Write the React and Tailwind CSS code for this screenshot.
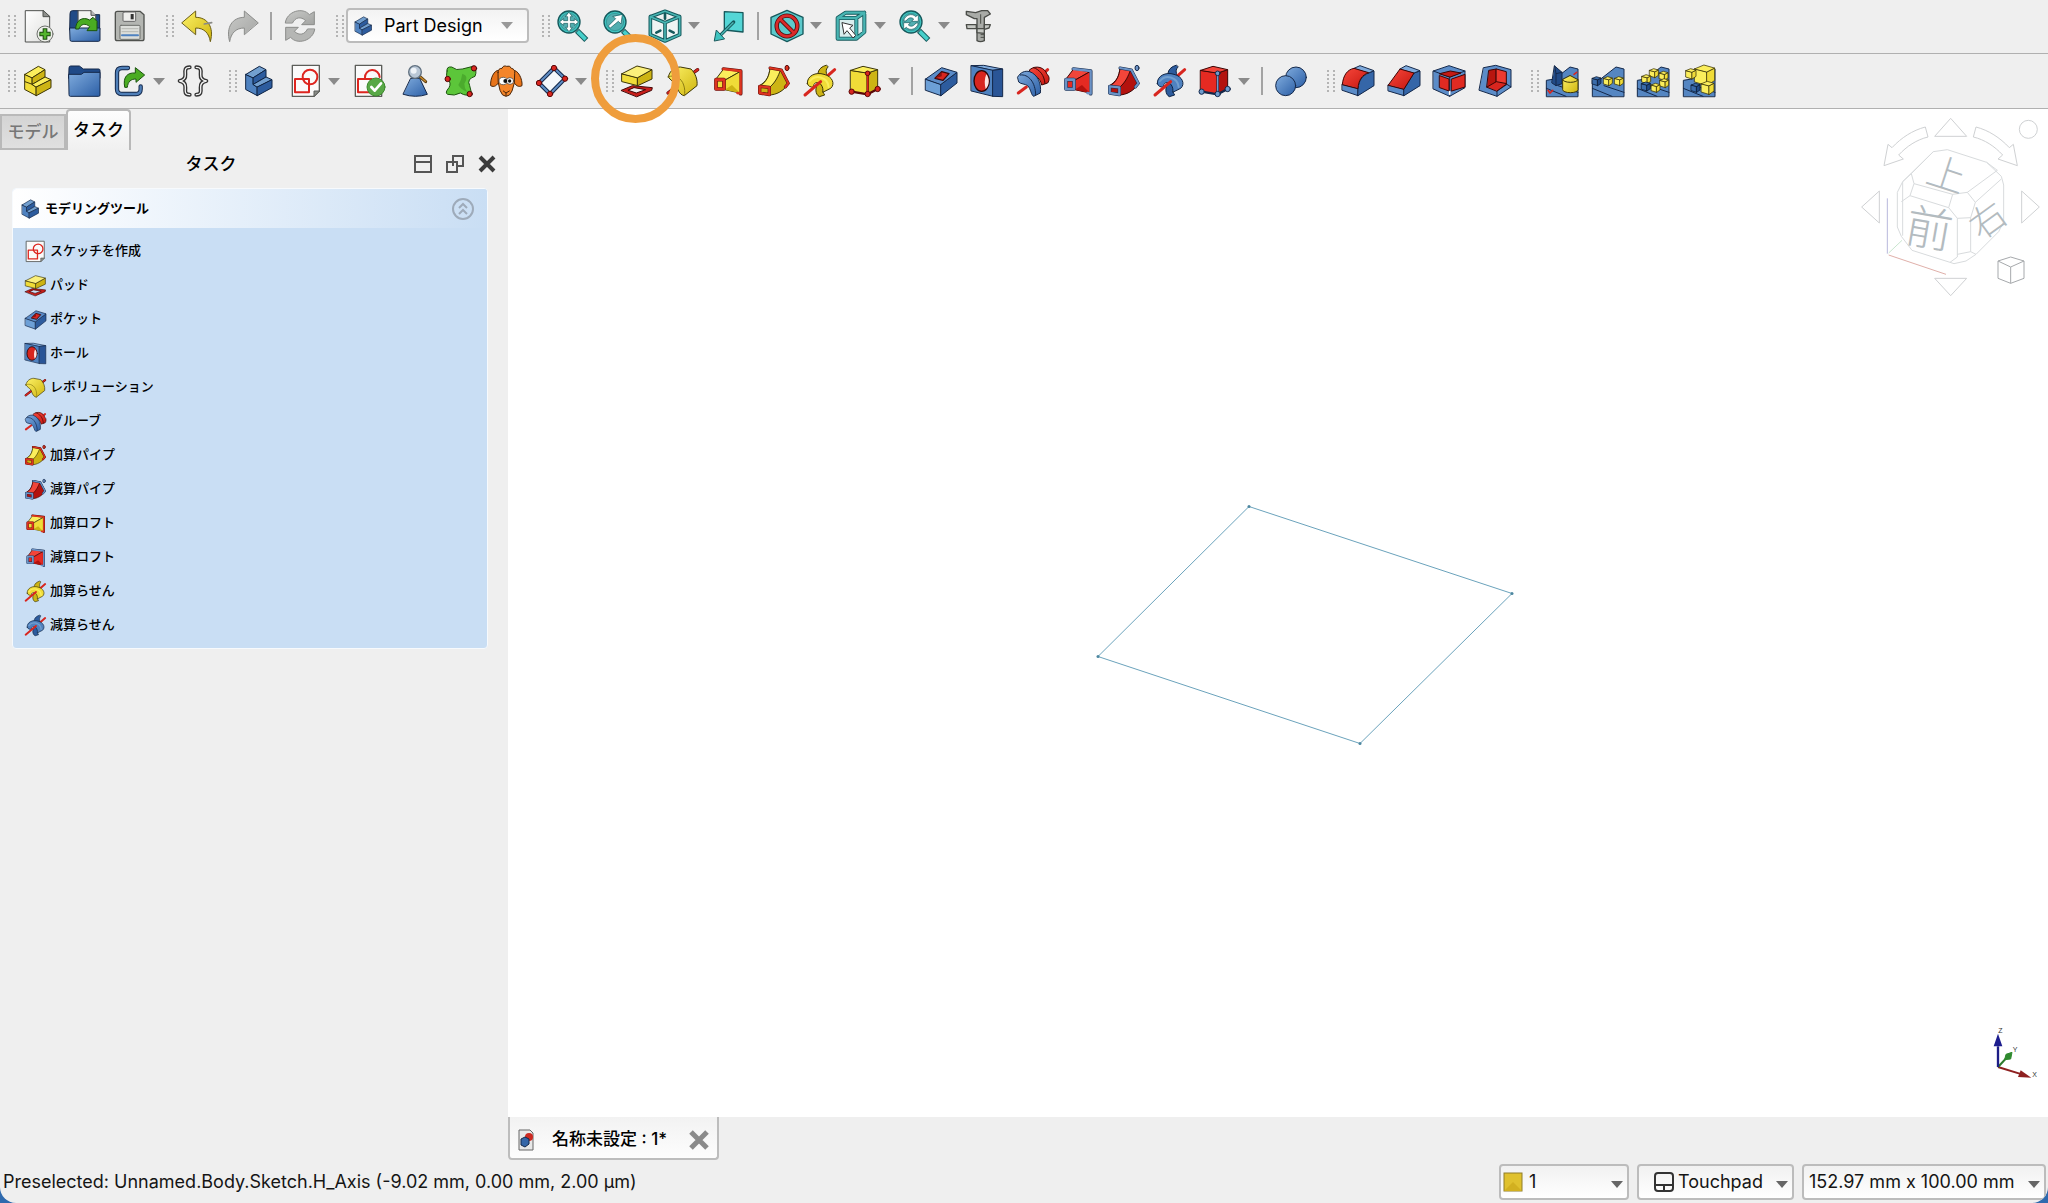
import { useState } from "react"

const INK = "#14284a"

const PALETTES = {
  blue: { light: "#729fcf", mid: "#4f82c0", dark: "#2d5c9e", line: "#0f2444" },
  navy: { light: "#3a6cab", mid: "#204a87", dark: "#173666", line: "#0a1a33" },
  yellow: { light: "#fbee5c", mid: "#f0dc38", dark: "#cdb414", line: "#3d3608" },
  red: { light: "#f2453a", mid: "#e52a22", dark: "#b3120e", line: "#3d0606" },
}

const TEAL = "#3fc4c0"
const TEAL_LINE = "#16595c"

function Svg({ children, className = "size-8" }) {
  return (
    <svg
      viewBox="0 0 96 96"
      className={`${className} shrink-0 overflow-visible`}
      fill="none"
      strokeLinejoin="round"
      strokeLinecap="round"
      strokeWidth="3"
      aria-hidden="true"
    >
      {children}
    </svg>
  )
}

function Gradients() {
  return (
    <svg className="absolute size-0" aria-hidden="true">
      <defs>
        <linearGradient id="g-blue" x1="0" y1="0" x2="1" y2="1">
          <stop offset="0" stopColor="#7fabdd" />
          <stop offset="1" stopColor="#2c5fa6" />
        </linearGradient>
        <linearGradient id="g-yellow" x1="0" y1="0" x2="1" y2="1">
          <stop offset="0" stopColor="#fdf267" />
          <stop offset="1" stopColor="#cfb50f" />
        </linearGradient>
        <linearGradient id="g-red" x1="0" y1="0" x2="1" y2="1">
          <stop offset="0" stopColor="#f7473b" />
          <stop offset="1" stopColor="#c5160f" />
        </linearGradient>
        <linearGradient id="g-grey" x1="0" y1="0" x2="1" y2="1">
          <stop offset="0" stopColor="#c9cac8" />
          <stop offset="1" stopColor="#a2a3a1" />
        </linearGradient>
        <linearGradient id="g-paper" x1="0" y1="0" x2="1" y2="1">
          <stop offset="0" stopColor="#ffffff" />
          <stop offset="1" stopColor="#dededc" />
        </linearGradient>
      </defs>
    </svg>
  )
}

/* ---------- file and edit icons ---------- */

function NewIcon() {
  return (
    <Svg>
      <path d="M8 2H60L80 20V96H8Z" fill="url(#g-paper)" stroke="#4f514e" />
      <path d="M60 2V20H80Z" fill="#8d8f8b" stroke="#4f514e" />
      <circle cx="66" cy="72" r="24" fill="#eef0ea" stroke="#6d6f6b" />
      <path d="M66 55V89M49 72H83" stroke="#1d4a10" strokeWidth="14" strokeLinecap="butt" />
      <path d="M66 58V86M52 72H80" stroke="#54b52d" strokeWidth="8" strokeLinecap="butt" />
    </Svg>
  )
}

function OpenIcon() {
  return (
    <Svg>
      <path d="M3 10Q3 2 10 2H30V14H92V60H3Z" fill="#204a87" stroke={INK} />
      <path d="M28 2H66L80 16V64H28Z" fill="#f4f4f2" stroke="#555" />
      <path d="M66 2V16H80" fill="#bbb" stroke="#555" />
      <path d="M3 54H93V90Q93 94 88 94H8Q3 94 3 90Z" fill="url(#g-blue)" stroke={INK} />
      <path
        d="M20 56C20 32 40 18 62 30L72 22L84 34V62H54L62 50C50 38 34 42 30 56Z"
        fill="#4aac22"
        stroke="#1b530e"
      />
    </Svg>
  )
}

function SaveIcon() {
  return (
    <Svg>
      <path d="M10 4H78L90 14V86Q90 92 84 92H10Q4 92 4 86V10Q4 4 10 4Z" fill="#b4b6b2" stroke="#4f514e" strokeWidth="4" />
      <rect x="27" y="6" width="38" height="28" rx="3" fill="#eeeeec" stroke="#666" />
      <rect x="50" y="12" width="9" height="16" fill="#333" />
      <rect x="18" y="46" width="60" height="42" rx="3" fill="#dcdeda" stroke="#6d6f6b" />
      <path d="M24 56H72M24 65H72" stroke="#b6b8b4" />
      <path d="M24 76H72" stroke="#4f82c0" strokeWidth="6" />
    </Svg>
  )
}

function UndoIcon() {
  return (
    <Svg>
      <path d="M3 38L44 3V22C80 22 100 52 88 95C84 70 70 54 44 54V73Z" fill="url(#g-yellow)" stroke="#6b5d12" />
      <path d="M70 42L92 38" stroke="#8a8a86" strokeWidth="5" />
    </Svg>
  )
}

function RedoIcon() {
  return (
    <Svg>
      <path d="M93 38L52 3V22C16 22 -4 52 8 95C12 70 26 54 52 54V73Z" fill="url(#g-grey)" stroke="#8b8c8a" />
    </Svg>
  )
}

function RefreshIcon() {
  const arrow = "M4 38C8 4 56 -10 76 14L91 5V44H53L65 32C50 18 34 22 26 38Z"
  return (
    <Svg>
      <path d={arrow} fill="url(#g-grey)" stroke="#8b8c8a" />
      <path d={arrow} transform="rotate(180 48 48)" fill="#b5b6b4" stroke="#8b8c8a" />
    </Svg>
  )
}

/* ---------- view icons ---------- */

function Magnifier({ children }) {
  return (
    <Svg>
      <path d="M60 62L88 90" stroke={TEAL_LINE} strokeWidth="17" strokeLinecap="butt" />
      <path d="M62 64L86 88" stroke="#46cfca" strokeWidth="11" strokeLinecap="butt" />
      <circle cx="36" cy="36" r="33" fill={TEAL} stroke={TEAL_LINE} strokeWidth="4" />
      <circle cx="36" cy="36" r="26" fill="#52aeb0" stroke="#2b8d8d" strokeWidth="2" />
      {children}
    </Svg>
  )
}

function FitAllIcon() {
  return (
    <Magnifier>
      <path
        d="M36 7L46 20H40V32H52V26L65 36L52 46V40H40V52H46L36 65L26 52H32V40H20V46L7 36L20 26V32H32V20H26Z"
        fill="#fff"
        stroke={TEAL_LINE}
        strokeWidth="2"
      />
    </Magnifier>
  )
}

function FitSelectionIcon() {
  return (
    <Magnifier>
      <path d="M58 14L54 42L46 34L22 54L16 48L38 26L30 20Z" fill="#fff" stroke={TEAL_LINE} strokeWidth="2" />
    </Magnifier>
  )
}

function SyncViewIcon() {
  return (
    <Magnifier>
      <path d="M14 32C18 14 40 8 50 20L58 14V34H38L44 27C36 20 26 24 22 32Z" fill="#fff" stroke={TEAL_LINE} strokeWidth="2" />
      <path d="M58 40C54 58 32 64 22 52L14 58V38H34L28 45C36 52 46 48 50 40Z" fill="#fff" stroke={TEAL_LINE} strokeWidth="2" />
    </Magnifier>
  )
}

function IsometricIcon() {
  const frame = "M48 4L92 20V74L48 93L4 74V20ZM4 20L48 38L92 20M48 38V93"
  return (
    <Svg>
      <path d={frame} fill="#eef4f4" stroke={TEAL_LINE} strokeWidth="11" />
      <path d={frame} stroke="#48b5b3" strokeWidth="5" />
      <path d="M22 68L34 62M62 62L74 68M48 12V26" stroke={TEAL_LINE} strokeWidth="8" />
    </Svg>
  )
}

function AlignIcon() {
  return (
    <Svg>
      <path d="M34 5L90 8V66L34 60Z" fill="#54d6d6" stroke={TEAL_LINE} strokeWidth="4" />
      <path d="M62 36L24 74" stroke={TEAL_LINE} strokeWidth="10" />
      <path d="M60 38L24 74" stroke="#48b5b3" strokeWidth="4" />
      <path d="M4 92L10 60L34 86Z" fill={TEAL} stroke={TEAL_LINE} />
    </Svg>
  )
}

function DrawStyleIcon() {
  return (
    <Svg>
      <path d="M48 1L96 22V72L48 95L0 72V22Z" fill="#5cc9cb" stroke={TEAL_LINE} strokeWidth="4" />
      <circle cx="48" cy="48" r="31" stroke="#4a0d0d" strokeWidth="13" />
      <path d="M27 27L69 69" stroke="#4a0d0d" strokeWidth="13" />
      <circle cx="48" cy="48" r="31" stroke="#d92a2a" strokeWidth="8" />
      <path d="M27 27L69 69" stroke="#d92a2a" strokeWidth="8" />
    </Svg>
  )
}

function SelectionViewIcon() {
  const frame = "M8 24L32 8H88L88 66L64 86H8ZM8 24H64L88 8M64 24V86"
  return (
    <Svg>
      <path d={frame} fill="#d9eeee" stroke={TEAL_LINE} strokeWidth="12" />
      <path d={frame} stroke="#48b5b3" strokeWidth="7" />
      <path d="M22 38L54 46L44 54L62 76L54 84L36 62L28 72Z" fill="#fff" stroke="#333" />
    </Svg>
  )
}

function MeasureIcon() {
  return (
    <Svg>
      <path d="M10 4L38 8L56 2H74L82 12L64 22V92Q52 98 42 92V26H34L10 14Z" fill="#a9aba7" stroke="#4a4c48" strokeWidth="4" />
      <path d="M10 44H40V56H64V44H82L78 54L64 58V70L42 68V56H12Z" fill="#c6c8c4" stroke="#4a4c48" strokeWidth="4" />
      <path d="M53 14V40M54 74H62M54 82H62" stroke="#4a4c48" />
    </Svg>
  )
}

/* ---------- structure icons ---------- */

function StairIcon({ tone = "blue", split = false, className }) {
  const c = PALETTES[tone]
  return (
    <Svg className={className}>
      <g stroke={c.line}>
        <path d="M6 28L28 38V58L40 66V92L6 74Z" fill={c.mid} />
        <path d="M6 28L46 4L66 14L28 38Z" fill={c.light} />
        <path d="M28 38L66 14V36L28 58Z" fill={c.dark} />
        <path d="M28 58L66 36L84 44L40 66Z" fill={c.light} />
        <path d="M40 66L84 44V68L40 92Z" fill={c.dark} />
        {split && <path d="M6 50L28 58" />}
      </g>
    </Svg>
  )
}

function GroupIcon() {
  return (
    <Svg>
      <path d="M3 8Q3 3 8 3H34L46 12H92Q96 12 96 17V40H3Z" fill="#204a87" stroke={INK} />
      <path d="M3 28H40L48 22H96V90Q96 94 92 94H7Q3 94 3 90Z" fill="url(#g-blue)" stroke={INK} />
    </Svg>
  )
}

function LinkIcon() {
  const frame = "M42 9H24Q9 9 9 24V72Q9 87 24 87H66Q80 87 80 72V64"
  return (
    <Svg>
      <path d={frame} stroke={INK} strokeWidth="13" />
      <path d={frame} stroke="#4f7fb8" strokeWidth="7" />
      <path d="M32 66C26 36 40 22 64 24V8L92 30L66 52V42C50 42 42 50 40 66Z" fill="#4aac22" stroke="#1b530e" />
    </Svg>
  )
}

function VariableSetIcon() {
  const left = "M38 7C24 7 24 14 25 28C26 40 20 46 8 48C20 50 26 56 25 68C24 82 24 89 38 89"
  return (
    <Svg>
      <path d={left} stroke="#333" strokeWidth="12" />
      <path d={left} stroke="#f4f4f4" strokeWidth="4" />
      <g transform="matrix(-1 0 0 1 96 0)">
        <path d={left} stroke="#333" strokeWidth="12" />
        <path d={left} stroke="#f4f4f4" strokeWidth="4" />
      </g>
    </Svg>
  )
}

/* ---------- sketch icons ---------- */

function SketchIcon({ className }) {
  return (
    <Svg className={className}>
      <path d="M7 1H88V78L72 94H7Z" fill="#fafafa" stroke="#5c5e5a" strokeWidth="4" />
      <path d="M72 94V78H88Z" fill="#8b8d89" stroke="#5c5e5a" />
      <rect x="15" y="42" width="42" height="40" stroke="#dd2620" strokeWidth="6" />
      <circle cx="60" cy="36" r="22" stroke="#dd2620" strokeWidth="6" />
    </Svg>
  )
}

function ValidateSketchIcon() {
  return (
    <Svg>
      <path d="M7 1H86V94H7Z" fill="#fafafa" stroke="#5c5e5a" strokeWidth="4" />
      <path d="M15 42H56V82H15ZM36 38A22 22 0 0 1 80 36" stroke="#dd2620" strokeWidth="6" />
      <circle cx="69" cy="66" r="27" fill="#58a846" stroke="#3c8a2c" />
      <path d="M55 66L65 77L84 55" stroke="#fff" strokeWidth="8" />
    </Svg>
  )
}

function CheckGeometryIcon() {
  return (
    <Svg>
      <path d="M36 40H62L85 88Q50 100 13 88Z" fill="url(#g-blue)" stroke={INK} />
      <path d="M62 34L80 50" stroke="#5a3c10" strokeWidth="9" />
      <path d="M64 36L79 49" stroke="#c98a2c" strokeWidth="4" />
      <circle cx="48" cy="21" r="19" fill="#b9c7d6" stroke="#60707f" strokeWidth="4" />
      <circle cx="44" cy="17" r="9" fill="#eef3f8" />
    </Svg>
  )
}

function SubShapeBinderIcon() {
  return (
    <Svg>
      <path
        d="M6 18Q4 4 20 6Q34 18 52 12L84 4Q98 14 90 34Q64 42 74 62L80 86Q66 96 46 84Q28 94 8 88Q-2 84 12 68Q20 54 8 42Q2 32 6 18Z"
        fill="#5cc63a"
        stroke="#1d5410"
      />
      <path d="M52 26Q74 32 58 56Q58 70 66 80Q48 74 40 60Q50 44 52 26Z" fill="#3f9a25" opacity="0.6" />
      <g fill="#d8261f" stroke="#4a0808">
        <circle cx="87" cy="10" r="8" />
        <circle cx="8" cy="42" r="8" />
        <circle cx="74" cy="87" r="8" />
      </g>
    </Svg>
  )
}

function CloneIcon() {
  return (
    <Svg>
      <path d="M26 16C12 14 0 42 2 62C12 68 22 62 28 48Z" fill="#e8741a" stroke="#4a260a" />
      <path d="M70 16C84 14 98 42 96 62C86 68 76 62 70 48Z" fill="#e8741a" stroke="#4a260a" />
      <path
        d="M24 22Q24 10 36 10Q40 0 50 4Q60 0 64 10Q76 12 74 26Q76 56 66 78Q60 94 48 94Q36 94 30 76Q22 54 24 22Z"
        fill="#f4852a"
        stroke="#4a260a"
      />
      <ellipse cx="40" cy="48" rx="13" ry="11" fill="#fff" stroke="#333" strokeWidth="2" />
      <ellipse cx="60" cy="48" rx="11" ry="10" fill="#fff" stroke="#333" strokeWidth="2" />
      <circle cx="46" cy="48" r="6" fill="#111" />
      <circle cx="59" cy="48" r="5" fill="#111" />
      <path d="M40 78L48 84L58 78M48 84V92" stroke="#4a260a" />
    </Svg>
  )
}

function DatumPlaneIcon() {
  const plane = "M54 9L87 41L42 87L9 54Z"
  return (
    <Svg>
      <path d={plane} fill="#f6f8fb" stroke={INK} strokeWidth="12" />
      <path d={plane} stroke="#5f8dc4" strokeWidth="6" />
      <g fill="#d8261f" stroke="#5a0808">
        <circle cx="54" cy="9" r="8" />
        <circle cx="87" cy="41" r="8" />
        <circle cx="42" cy="87" r="8" />
        <circle cx="9" cy="54" r="8" />
      </g>
    </Svg>
  )
}

/* ---------- additive and subtractive icons ---------- */

function PadIcon({ className }) {
  return (
    <Svg className={className}>
      <path
        fillRule="evenodd"
        d="M1 76L34 62L94 68L92 76L48 95ZM22 76L46 84L74 74L40 68Z"
        fill="#c81e1a"
        stroke="#420606"
      />
      <path d="M3 26L50 38V62L3 50Z" fill="#f0dc38" stroke="#3d3608" />
      <path d="M50 38L93 14V42L50 62Z" fill="#cdb414" stroke="#3d3608" />
      <path d="M3 26L48 3L93 14L50 38Z" fill="#fbf07a" stroke="#3d3608" />
    </Svg>
  )
}

function RevolutionIcon({ className }) {
  return (
    <Svg className={className}>
      <path d="M70 30L92 14" stroke="#5a0b0b" strokeWidth="10" />
      <path d="M70 30L92 14" stroke="#d8261f" strokeWidth="6" />
      <path
        d="M4 36C8 16 24 6 40 6L72 12C86 26 92 44 90 62L52 92C36 90 32 70 26 58C20 50 10 46 4 36Z"
        fill="url(#g-yellow)"
        stroke="#3d3608"
      />
      <path d="M4 36C22 26 44 40 50 60C54 72 54 82 52 92" stroke="#8d7d12" />
      <path d="M3 84L26 66" stroke="#5a0b0b" strokeWidth="10" />
      <path d="M3 84L26 66" stroke="#d8261f" strokeWidth="6" />
    </Svg>
  )
}

function GrooveIcon({ className }) {
  return (
    <Svg className={className}>
      <path d="M72 32L92 14" stroke="#d8261f" strokeWidth="9" />
      <path d="M38 14C58 -2 84 8 90 28C98 34 98 46 92 54L74 60C70 42 58 30 42 28Z" fill="url(#g-red)" stroke="#3d0606" />
      <path d="M50 8C68 14 82 30 84 56" stroke="#3d0606" />
      <path d="M2 36C10 22 24 16 38 20C62 28 74 56 70 84L50 94C42 90 42 72 32 62C24 56 12 58 6 52Z" fill="url(#g-blue)" stroke={INK} />
      <path d="M10 30C34 26 56 52 56 90" stroke={INK} />
      <path d="M4 84L28 66" stroke="#d8261f" strokeWidth="9" />
    </Svg>
  )
}

function LoftIcon({ cut = false, className }) {
  const c = cut ? PALETTES.red : PALETTES.yellow
  const edge = cut ? "#6c93c6" : "#dd3420"
  const edgeLine = cut ? INK : "#5a0b0b"
  return (
    <Svg className={className}>
      <path d="M34 12L86 18V86" stroke={edgeLine} strokeWidth="11" />
      <path d="M12 42L34 13L84 20L38 46Z" fill={c.light} stroke={c.line} />
      <path d="M38 46L84 20V84L38 74Z" fill={c.mid} stroke={c.line} />
      <path d="M38 74L60 60L84 84Z" fill={c.dark} />
      <path d="M34 12L86 18V86L76 84" stroke={edge} strokeWidth="7" />
      <rect x="12" y="44" width="24" height="28" fill={c.mid} stroke={edgeLine} strokeWidth="11" />
      <rect x="12" y="44" width="24" height="28" stroke={edge} strokeWidth="8" />
    </Svg>
  )
}

function PipeIcon({ cut = false, className }) {
  const c = cut ? PALETTES.red : PALETTES.yellow
  const edge = cut ? "#6c93c6" : "#dd3420"
  const edgeLine = cut ? INK : "#5a0b0b"
  return (
    <Svg className={className}>
      <path d="M36 8L70 14L92 56C76 78 56 90 32 90L4 84V62C24 50 34 36 36 8Z" fill={c.dark} stroke={c.line} />
      <path d="M36 8L68 14C60 34 54 50 36 66L8 62C26 48 34 34 36 8Z" fill={c.light} stroke={c.line} />
      <path d="M36 9L70 15L91 55L82 66" stroke={edgeLine} strokeWidth="9" />
      <path d="M36 9L70 15L91 55L82 66" stroke={edge} strokeWidth="6" />
      <path d="M5 64L34 67V89L5 84Z" fill={c.dark} stroke={edgeLine} strokeWidth="10" />
      <path d="M5 64L34 67V89L5 84Z" stroke={edge} strokeWidth="7" />
      <ellipse cx="87" cy="9" rx="6" ry="8" fill={edge} stroke={edgeLine} />
    </Svg>
  )
}

function HelixIcon({ cut = false, className }) {
  const c = cut ? PALETTES.blue : PALETTES.yellow
  return (
    <Svg className={className}>
      <path d="M66 1C40 8 34 32 54 48L76 40C64 28 64 12 72 6Z" fill={c.dark} stroke={c.line} />
      <path d="M92 14L60 42" stroke="#d8261f" strokeWidth="9" />
      <path d="M42 54C32 70 34 88 46 95L62 90C54 80 58 66 68 58Z" fill={c.dark} stroke={c.line} />
      <path
        d="M10 56C8 32 36 20 60 28C86 34 94 58 80 70L56 82C60 66 48 48 34 54Q26 58 30 66Q14 68 10 56Z"
        fill={c.mid}
        stroke={c.line}
      />
      <path d="M18 48C34 28 70 34 74 66" stroke={c.light} strokeWidth="6" />
      <path d="M3 90L50 50" stroke="#d8261f" strokeWidth="9" />
    </Svg>
  )
}

function PrimitiveIcon({ cut = false }) {
  const c = cut ? PALETTES.red : PALETTES.yellow
  const node = cut ? "#6f9cce" : "#d8261f"
  const nodeLine = cut ? INK : "#5a0808"
  return (
    <Svg>
      <g stroke={c.line}>
        <path d="M5 16L56 24V88L5 80Z" fill={c.mid} />
        <path d="M56 24L86 14V72L56 88Z" fill={c.dark} />
        <path d="M5 16L42 4L86 14L56 24Z" fill={c.light} />
      </g>
      <path d="M56 26V86M8 80L56 88L86 72" stroke={nodeLine} strokeWidth="7" />
      <path d="M56 26V86" stroke={node} strokeWidth="4" />
      <g fill={node} stroke={nodeLine}>
        <circle cx="56" cy="25" r="7" />
        <circle cx="8" cy="80" r="8" />
        <circle cx="56" cy="87" r="8" />
        <circle cx="86" cy="72" r="8" />
      </g>
    </Svg>
  )
}

function PocketIcon({ className }) {
  return (
    <Svg className={className}>
      <path d="M2 42L48 58V92L2 76Z" fill="#6c9fd6" stroke={INK} />
      <path d="M48 58L96 22V54L48 92Z" fill="#2d5c9e" stroke={INK} />
      <path d="M2 42L50 8L96 22L48 58Z" fill="#5b8cc8" stroke={INK} />
      <path d="M30 40L50 20L72 26L54 46Z" fill="#d8261f" stroke="#3d0606" strokeWidth="4" />
      <path d="M50 20V34L30 40Z" fill="#8a1210" />
    </Svg>
  )
}

function HoleIcon({ className }) {
  return (
    <Svg className={className}>
      <path d="M1 2L38 1L95 12L64 16Z" fill="#7fabdd" stroke={INK} />
      <path d="M1 2L66 16V94L1 78Z" fill="#4f82c0" stroke={INK} />
      <path d="M66 16L95 12V95L66 94Z" fill="#2a5596" stroke={INK} />
      <ellipse cx="32" cy="48" rx="23" ry="31" fill="#d8261f" stroke="#2a0606" strokeWidth="4" />
      <path d="M46 28C56 40 56 60 44 72C40 58 40 42 46 28Z" fill="#fbe6e2" />
    </Svg>
  )
}

function BooleanIcon() {
  return (
    <Svg>
      <circle cx="63" cy="37" r="31" fill="url(#g-blue)" stroke={INK} />
      <circle cx="32" cy="62" r="30" fill="url(#g-blue)" stroke={INK} />
    </Svg>
  )
}

/* ---------- dress-up icons ---------- */

function FilletIcon() {
  return (
    <Svg>
      <path d="M1 58L48 70V92L1 76Z" fill="#5b8cc8" stroke={INK} />
      <path d="M48 70C50 44 62 28 96 18V62L48 92Z" fill="#3566a8" stroke={INK} />
      <path d="M36 10L54 2L96 17L80 24Z" fill="#7fabdd" stroke={INK} />
      <path d="M1 58C4 30 16 14 36 10L80 23C60 30 50 44 48 70Z" fill="url(#g-red)" stroke="#3d0606" />
    </Svg>
  )
}

function ChamferIcon() {
  return (
    <Svg>
      <path d="M1 60L48 72V92L1 78Z" fill="#5b8cc8" stroke={INK} />
      <path d="M48 72L78 24L96 18V62L48 92Z" fill="#3566a8" stroke={INK} />
      <path d="M36 12L54 2L96 17L78 24Z" fill="#7fabdd" stroke={INK} />
      <path d="M1 60L36 12L78 24L48 72Z" fill="url(#g-red)" stroke="#3d0606" />
    </Svg>
  )
}

function DraftIcon() {
  return (
    <Svg>
      <path d="M1 18L48 2L96 18V68L50 94L1 72Z" fill="#5b8cc8" stroke={INK} />
      <path d="M1 18L50 36L96 18M50 36V94" stroke={INK} />
      <path d="M20 32L48 42V78L20 68Z" fill="#e02a22" stroke="#3d0606" />
      <path d="M56 42L96 28V66L56 78Z" fill="#e02a22" stroke="#3d0606" />
      <path d="M20 26L52 18L84 24L52 36Z" fill="#c51a14" stroke="#3d0606" />
      <path d="M50 80V88" stroke="#fff" strokeWidth="5" />
    </Svg>
  )
}

function ThicknessIcon() {
  return (
    <Svg>
      <path d="M14 8L50 1L96 14V66L54 94L1 76Z" fill="#5b8cc8" stroke={INK} />
      <path d="M54 94V78L84 58L96 66" stroke={INK} />
      <path d="M30 16L52 12V60L24 66Z" fill="#b8160f" stroke="#3d0606" />
      <path d="M52 12L82 20V56L52 60Z" fill="#ee3a30" stroke="#3d0606" />
      <path d="M24 66L52 50L84 56L54 78Z" fill="#d8261f" stroke="#3d0606" />
    </Svg>
  )
}

/* ---------- transform icons ---------- */

function MiniCube({ x, y, size = 26, tone = "yellow" }) {
  const c = PALETTES[tone]
  return (
    <g transform={`translate(${x} ${y}) scale(${size / 26})`} stroke={c.line} strokeWidth={60 / size}>
      <path d="M-13 -8L3 -4V14L-13 9Z" fill={c.light} />
      <path d="M3 -4L13 -9V7L3 14Z" fill={c.mid} />
      <path d="M-13 -8L-1 -13L13 -9L3 -4Z" fill={c.light} />
    </g>
  )
}

function PatternBase({ children }) {
  return (
    <Svg>
      <path d="M1 94V46L26 42L72 6L96 12V94Z" fill="#5586c2" stroke={INK} />
      <path d="M1 70L60 94M36 62L96 82" stroke={INK} />
      {children}
    </Svg>
  )
}

function MirrorIcon() {
  return (
    <PatternBase>
      <path d="M26 3L48 22V56L30 62L18 54Z" fill="#204a87" stroke={INK} />
      <path d="M26 3L30 26L48 22M30 26V62" stroke={INK} />
      <path d="M50 44V74A23 9 0 0 0 96 74V44L73 32Z" fill="url(#g-yellow)" stroke="#3d3608" />
      <path d="M50 44A23 8 0 0 0 96 44" stroke="#3d3608" />
      <path d="M6 76L12 84L20 76M84 28L92 22" stroke="#d8261f" strokeWidth="5" />
    </PatternBase>
  )
}

function LinearPatternIcon() {
  return (
    <PatternBase>
      <MiniCube x={14} y={48} tone="navy" />
      <MiniCube x={48} y={48} />
      <MiniCube x={81} y={48} />
    </PatternBase>
  )
}

function PolarPatternIcon() {
  return (
    <PatternBase>
      <MiniCube x={51} y={24} />
      <MiniCube x={80} y={32} />
      <MiniCube x={28} y={42} />
      <MiniCube x={82} y={54} />
      <MiniCube x={27} y={64} tone="navy" />
      <MiniCube x={56} y={68} />
    </PatternBase>
  )
}

function MultiTransformIcon() {
  return (
    <PatternBase>
      <MiniCube x={65} y={30} size={60} />
      <MiniCube x={24} y={26} size={30} />
      <MiniCube x={38} y={68} tone="navy" />
      <MiniCube x={74} y={68} size={38} />
    </PatternBase>
  )
}

/* ---------- toolbars ---------- */

const fileTools = [
  { label: "新規", icon: <NewIcon /> },
  { label: "開く", icon: <OpenIcon /> },
  { label: "保存", icon: <SaveIcon /> },
]

const editTools = [
  { label: "元に戻す", icon: <UndoIcon /> },
  { label: "やり直し", icon: <RedoIcon /> },
  { separator: true },
  { label: "更新", icon: <RefreshIcon /> },
]

const viewTools = [
  { label: "全てにフィット", icon: <FitAllIcon /> },
  { label: "選択にフィット", icon: <FitSelectionIcon /> },
  { label: "アイソメトリック", icon: <IsometricIcon />, menu: true },
  { label: "選択に整列", icon: <AlignIcon /> },
  { separator: true },
  { label: "表示スタイル", icon: <DrawStyleIcon />, menu: true },
  { label: "選択ビュー", icon: <SelectionViewIcon />, menu: true },
  { label: "ビューを同期", icon: <SyncViewIcon />, menu: true },
  { label: "測定", icon: <MeasureIcon /> },
]

const structureTools = [
  { label: "パーツを作成", icon: <StairIcon tone="yellow" split /> },
  { label: "グループを作成", icon: <GroupIcon /> },
  { label: "リンクを作成", icon: <LinkIcon />, menu: true },
  { label: "変数セット", icon: <VariableSetIcon /> },
]

const helperTools = [
  { label: "ボディを作成", icon: <StairIcon /> },
  { label: "スケッチを作成", icon: <SketchIcon />, menu: true },
  { label: "スケッチを検証", icon: <ValidateSketchIcon /> },
  { label: "ジオメトリーをチェック", icon: <CheckGeometryIcon /> },
  { label: "シェイプバインダー", icon: <SubShapeBinderIcon /> },
  { label: "クローンを作成", icon: <CloneIcon /> },
  { label: "データム平面", icon: <DatumPlaneIcon />, menu: true },
]

const modelingTools = [
  { label: "パッド", icon: <PadIcon /> },
  { label: "レボリューション", icon: <RevolutionIcon /> },
  { label: "加算ロフト", icon: <LoftIcon /> },
  { label: "加算パイプ", icon: <PipeIcon /> },
  { label: "加算らせん", icon: <HelixIcon /> },
  { label: "加算プリミティブ", icon: <PrimitiveIcon />, menu: true },
  { separator: true },
  { label: "ポケット", icon: <PocketIcon /> },
  { label: "ホール", icon: <HoleIcon /> },
  { label: "グルーブ", icon: <GrooveIcon /> },
  { label: "減算ロフト", icon: <LoftIcon cut /> },
  { label: "減算パイプ", icon: <PipeIcon cut /> },
  { label: "減算らせん", icon: <HelixIcon cut /> },
  { label: "減算プリミティブ", icon: <PrimitiveIcon cut />, menu: true },
  { separator: true },
  { label: "ブーリアン", icon: <BooleanIcon /> },
]

const dressUpTools = [
  { label: "フィレット", icon: <FilletIcon /> },
  { label: "面取り", icon: <ChamferIcon /> },
  { label: "抜き勾配", icon: <DraftIcon /> },
  { label: "厚み", icon: <ThicknessIcon /> },
]

const transformTools = [
  { label: "鏡像", icon: <MirrorIcon /> },
  { label: "直線状パターン", icon: <LinearPatternIcon /> },
  { label: "円状パターン", icon: <PolarPatternIcon /> },
  { label: "マルチ変換", icon: <MultiTransformIcon /> },
]

function Caret({ className = "text-[#8a8a8a]" }) {
  return (
    <svg viewBox="0 0 12 7" className={`h-[7px] w-3 shrink-0 ${className}`} aria-hidden="true">
      <path d="M0 0H12L6 7Z" fill="currentColor" />
    </svg>
  )
}

function Grip() {
  return (
    <svg viewBox="0 0 8 24" className="h-6 w-2 shrink-0" aria-hidden="true">
      <path
        d="M1 1V24M7 1V24"
        stroke="#b4b4b4"
        strokeWidth="2"
        strokeDasharray="2 2"
        fill="none"
      />
    </svg>
  )
}

function ToolGroup({ tools, className }) {
  return (
    <div className={`flex shrink-0 items-center ${className}`}>
      {tools.map((tool, i) =>
        tool.separator ? (
          <div key={i} className="flex w-3 shrink-0 justify-center">
            <span className="h-7 w-0.5 bg-[#a3a3a3]" />
          </div>
        ) : (
          <div key={i} className="flex flex-auto items-center">
            <button type="button" aria-label={tool.label} className="flex flex-1 justify-center">
              {tool.icon}
            </button>
            {tool.menu && (
              <button type="button" aria-label={`${tool.label} メニュー`} className="flex w-[18px] justify-start">
                <Caret />
              </button>
            )}
          </div>
        )
      )}
    </div>
  )
}

/* ---------- task panel ---------- */

const tasks = [
  { label: "スケッチを作成", icon: <SketchIcon className="size-[21px]" /> },
  { label: "パッド", icon: <PadIcon className="size-[21px]" /> },
  { label: "ポケット", icon: <PocketIcon className="size-[21px]" /> },
  { label: "ホール", icon: <HoleIcon className="size-[21px]" /> },
  { label: "レボリューション", icon: <RevolutionIcon className="size-[21px]" /> },
  { label: "グルーブ", icon: <GrooveIcon className="size-[21px]" /> },
  { label: "加算パイプ", icon: <PipeIcon className="size-[21px]" /> },
  { label: "減算パイプ", icon: <PipeIcon cut className="size-[21px]" /> },
  { label: "加算ロフト", icon: <LoftIcon className="size-[21px]" /> },
  { label: "減算ロフト", icon: <LoftIcon cut className="size-[21px]" /> },
  { label: "加算らせん", icon: <HelixIcon className="size-[21px]" /> },
  { label: "減算らせん", icon: <HelixIcon cut className="size-[21px]" /> },
]

function SidePanel() {
  const [open, setOpen] = useState(true)

  return (
    <aside className="flex w-[508px] shrink-0 flex-col bg-[#efefef]">
      <div className="flex h-[41px] items-end text-[17px] font-medium">
        <button
          type="button"
          className="h-9 w-[66px] border-2 border-[#b9b9b9] bg-linear-to-b from-[#d4d4d4] to-[#e0e0e0] leading-none text-[#777]"
        >
          モデル
        </button>
        <button
          type="button"
          className="h-[41px] w-[65px] rounded-t-sm border-x-2 border-t-2 border-[#b9b9b9] bg-linear-to-b from-[#fdfdfd] to-[#f0f0f0] leading-none text-black"
        >
          タスク
        </button>
      </div>

      <div className="flex h-7 items-center pr-3 pl-2">
        <h2 className="flex-1 text-center text-[17px] leading-none font-medium text-black">タスク</h2>
        <div className="flex items-center gap-3.5 text-[#555]">
          <button type="button" aria-label="折りたたむ">
            <svg viewBox="0 0 18 18" className="size-[18px]" fill="none" stroke="currentColor" strokeWidth="2">
              <path d="M1 1H17V17H1ZM1 7H17" />
            </svg>
          </button>
          <button type="button" aria-label="フロート">
            <svg viewBox="0 0 18 18" className="size-[18px]" fill="none" stroke="currentColor" strokeWidth="2">
              <path d="M7 11V1H17V11H11M1 7H11V17H1Z" />
            </svg>
          </button>
          <button type="button" aria-label="閉じる">
            <svg viewBox="0 0 18 18" className="size-[18px] text-[#3c3c3c]" fill="none" stroke="currentColor" strokeWidth="4">
              <path d="M2 2L16 16M16 2L2 16" />
            </svg>
          </button>
        </div>
      </div>

      <section className="mr-5 ml-3 mt-2.5 overflow-hidden rounded border border-[#f7fafd] bg-[#c9def4] text-[13px] font-medium text-black">
        <header className="flex h-[39px] items-center bg-linear-to-r from-white to-[#c9def4] px-2 pr-3">
          <StairIcon className="size-5" />
          <h3 className="ml-1 flex-1 font-bold">モデリングツール</h3>
          <button type="button" aria-label="モデリングツールを折りたたむ" onClick={() => setOpen(!open)}>
            <svg viewBox="0 0 24 24" className="size-6" fill="none" stroke="#9eabba" strokeWidth="2">
              <circle cx="12" cy="12" r="10" />
              <path d="M8 11L12 7L16 11M8 17L12 13L16 17" />
            </svg>
          </button>
        </header>
        {open && (
          <ul className="py-1.5 pl-3">
            {tasks.map((task) => (
              <li key={task.label} className="h-[34px]">
                <button type="button" className="flex h-full items-center gap-1">
                  {task.icon}
                  <span>{task.label}</span>
                </button>
              </li>
            ))}
          </ul>
        )}
      </section>
    </aside>
  )
}

/* ---------- 3D view ---------- */

function NavigationCube() {
  return (
    <svg
      viewBox="0 12 624 588"
      className="absolute top-0 right-0 h-[196px] w-[208px]"
      fill="none"
      stroke="#cfd1d3"
      strokeWidth="3"
      strokeLinejoin="round"
      aria-label="ナビゲーションキューブ"
    >
      <path d="M332 40L380 94H284Z" />
      <path d="M332 572L380 520H284Z" />
      <path d="M65 306L118 258V354Z" />
      <path d="M598 306L545 258V354Z" />
      <circle cx="565" cy="73" r="27" />
      <path d="M256 66L264 96C230 104 200 124 176 150L190 162L132 182L144 118L156 128C184 98 218 76 256 66Z" />
      <path d="M408 66L400 96C434 104 464 124 488 150L474 162L532 182L520 118L508 128C480 98 446 76 408 66Z" />

      <g stroke="#d8dbdd">
        <path d="M280 140L322 134L440 172L484 214L491 240V350L476 380L408 448L378 468L342 476L330 472L216 436L184 394L172 366V262L188 230Z" />
        <path d="M280 140L214 206L222 236L338 268L382 262L472 196L440 172" />
        <path d="M214 206L188 230L188 392M222 236L210 272L184 290M210 272L326 308L352 340V456L330 472" />
        <path d="M338 268L326 308M382 262L406 292L392 338L352 340M392 338V440L352 448M406 292L484 222M392 440L408 448" />
      </g>

      <g
        fill="#b3bbc0"
        stroke="none"
        fontFamily="'Noto Sans CJK JP', sans-serif"
        fontWeight="300"
        textAnchor="middle"
      >
        <text x="320" y="250" fontSize="116" transform="rotate(18 320 208)">上</text>
        <text x="268" y="422" fontSize="140" transform="rotate(10 268 370)">前</text>
        <text x="442" y="384" fontSize="108" transform="rotate(-36 442 344)">右</text>
      </g>

      <path d="M142 280V446" stroke="#b9b9dd" />
      <path d="M146 444L186 406" stroke="#c9e6cf" />
      <path d="M146 450L318 508" stroke="#e0b0aa" />

      <g stroke="#a6a9ac">
        <path d="M474 468L512 456L552 468V520L512 535L474 520Z" />
        <path d="M474 468L512 486L552 468M512 486V535" />
      </g>
    </svg>
  )
}

function AxisCross() {
  return (
    <svg viewBox="0 0 264 240" className="absolute right-0 bottom-[26px] h-20 w-[88px]" aria-hidden="true">
      <path d="M114 168L186 190" stroke="#8e2020" strokeWidth="6" />
      <path d="M182 178L214 200L174 198Z" fill="#8e2020" />
      <path d="M114 168L142 138" stroke="#2c7a2c" strokeWidth="6" />
      <path d="M156 124L152 144L134 146L138 130Z" fill="#2f8a2f" stroke="#2f8a2f" strokeWidth="3" />
      <path d="M114 168V106" stroke="#1d1d86" strokeWidth="7" />
      <path d="M114 68L127 106H101Z" fill="#1d1d8e" />
      <g fill="#333" fontFamily="'Liberation Sans', sans-serif" fontSize="21">
        <text x="115" y="65">Z</text>
        <text x="158" y="122">Y</text>
        <text x="217" y="198">X</text>
      </g>
    </svg>
  )
}

function Viewport() {
  return (
    <div className="relative min-h-0 flex-1 overflow-hidden bg-white">
      <svg viewBox="0 0 1540 1007" className="absolute inset-0 size-full" fill="none" aria-hidden="true">
        <path d="M741 397L1004 484L852 634L590 547Z" stroke="#6ba3bc" strokeWidth="1" />
        <g fill="#4d87a0">
          <circle cx="741" cy="397" r="1.5" />
          <circle cx="1004" cy="484" r="1.5" />
          <circle cx="852" cy="634" r="1.5" />
          <circle cx="590" cy="547" r="1.5" />
        </g>
      </svg>
      <NavigationCube />
      <AxisCross />
    </div>
  )
}

function DocumentTabs() {
  return (
    <div className="flex h-11 shrink-0 items-start bg-[#efefef]">
      <div className="flex h-[43px] w-[211px] items-center rounded-b border-x-2 border-b-2 border-[#bdbdbd] bg-linear-to-b from-[#f2f2f2] to-[#fdfdfd] px-2 pt-1">
        <svg viewBox="0 0 16 22" className="h-[22px] w-4 shrink-0" aria-hidden="true">
          <path d="M1 1H12L15 4V21H1Z" fill="#e8e8e8" stroke="#666" />
          <circle cx="11" cy="8" r="4" fill="#cc2a22" />
          <path d="M3 10L7 8L11 10V15L7 18L3 16Z" fill="#3566a8" stroke={INK} />
        </svg>
        <button type="button" className="ml-[18px] flex-1 text-left text-[17px] leading-none font-medium whitespace-nowrap text-black">
          名称未設定 : 1*
        </button>
        <button type="button" aria-label="タブを閉じる">
          <svg viewBox="0 0 20 20" className="size-5" fill="none" stroke="#8a8a8a" strokeWidth="5">
            <path d="M2 2L18 18M18 2L2 18" />
          </svg>
        </button>
      </div>
    </div>
  )
}

/* ---------- status bar ---------- */

function StatusSelect({ label, value, icon, className, selectClass }) {
  return (
    <label className={`relative flex h-9 items-center rounded border-2 border-[#bcbcbc] bg-linear-to-b from-[#f1f1f1] to-white ${className}`}>
      {icon && <span className="pointer-events-none absolute inset-y-0 left-0 flex items-center">{icon}</span>}
      <select
        aria-label={label}
        defaultValue={value}
        className={`size-full appearance-none bg-transparent leading-6 outline-none ${selectClass}`}
      >
        <option value={value}>{value}</option>
      </select>
      <Caret className="pointer-events-none absolute right-1 bottom-2.5 text-[#666]" />
    </label>
  )
}

function StatusBar() {
  return (
    <footer className="flex h-[42px] shrink-0 items-center pr-0.5 pl-[3px] text-[18px] text-[#151515]">
      <p className="flex-1 truncate leading-6">
        Preselected: Unnamed.Body.Sketch.H_Axis (-9.02 mm, 0.00 mm, 2.00 µm)
      </p>
      <div className="flex items-center gap-2">
        <StatusSelect
          label="通知"
          value="1"
          className="w-[130px]"
          selectClass="pl-7"
          icon={
            <svg viewBox="0 0 20 20" className="ml-0.5 size-5" aria-hidden="true">
              <rect x="1" y="1" width="18" height="18" fill="#e0c12e" stroke="#8f7d28" />
              <path d="M1 19L10 10L19 19Z" fill="#d2b020" />
            </svg>
          }
        />
        <StatusSelect
          label="ナビゲーションスタイル"
          value="Touchpad"
          className="w-[157px]"
          selectClass="pl-[39px]"
          icon={
            <svg viewBox="0 0 20 20" className="ml-[15px] size-5" fill="none" stroke="#333" strokeWidth="2" aria-hidden="true">
              <rect x="1" y="1" width="18" height="18" rx="3" />
              <path d="M1 13H19M10 13V19" />
            </svg>
          }
        />
        <StatusSelect label="寸法" value="152.97 mm x 100.00 mm" className="w-[244px]" selectClass="pl-[5px]" />
      </div>
    </footer>
  )
}

export default function App() {
  return (
    <div className="h-screen bg-[#2f6aae]">
      <Gradients />
      <div className="relative flex h-full flex-col overflow-hidden rounded-b-2xl bg-[#efefef] font-['Inter','Noto_Sans_CJK_JP',sans-serif]">
        <header className="shrink-0">
          <div className="flex h-[54px] items-center border-b border-[#b0b0b0] pb-0.5 pl-2">
            <Grip />
            <ToolGroup tools={fileTools} className="w-[137px]" />
            <div className="w-[13px] shrink-0" />
            <Grip />
            <ToolGroup tools={editTools} className="w-[149px]" />
            <div className="w-[13px] shrink-0" />
            <Grip />
            <label className="relative ml-0.5 flex h-[35px] w-[183px] shrink-0 items-center rounded border-2 border-[#bcbcbc] bg-linear-to-b from-[#f3f3f3] to-white">
              <span className="pointer-events-none absolute left-1.5">
                <StairIcon className="size-5" />
              </span>
              <select
                aria-label="ワークベンチ"
                defaultValue="Part Design"
                className="size-full appearance-none bg-transparent pl-9 text-[18px] leading-6 text-black outline-none"
              >
                <option>Part Design</option>
              </select>
              <Caret className="pointer-events-none absolute right-3.5 text-[#999]" />
            </label>
            <div className="w-[13px] shrink-0" />
            <Grip />
            <ToolGroup tools={viewTools} className="w-[452px]" />
          </div>

          <div className="flex h-[55px] items-center border-b border-[#b0b0b0] pl-2">
            <Grip />
            <ToolGroup tools={structureTools} className="w-[200px]" />
            <div className="w-[13px] shrink-0" />
            <Grip />
            <ToolGroup tools={helperTools} className="w-[356px]" />
            <div className="w-[13px] shrink-0" />
            <Grip />
            <ToolGroup tools={modelingTools} className="w-[700px]" />
            <div className="w-[13px] shrink-0" />
            <Grip />
            <ToolGroup tools={dressUpTools} className="w-[183px]" />
            <div className="w-[13px] shrink-0" />
            <Grip />
            <ToolGroup tools={transformTools} className="w-[183px]" />
          </div>
        </header>

        <div className="pointer-events-none absolute top-[34px] left-[591px] z-10 size-[89px] rounded-full border-8 border-[#ef9d3c]" />

        <div className="flex min-h-0 flex-1">
          <SidePanel />
          <main className="flex min-w-0 flex-1 flex-col">
            <Viewport />
            <DocumentTabs />
          </main>
        </div>

        <StatusBar />
      </div>
    </div>
  )
}
